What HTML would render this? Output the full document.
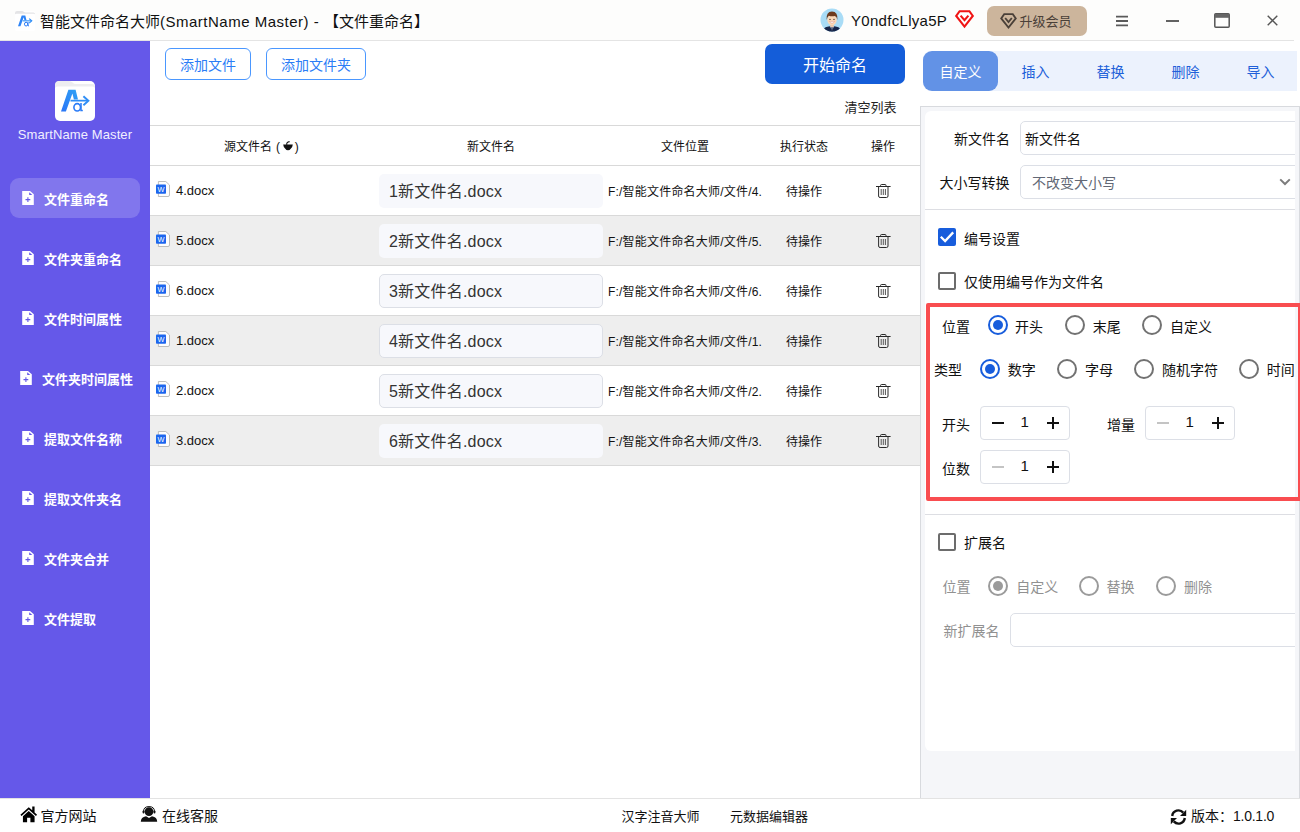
<!DOCTYPE html>
<html lang="zh-CN">
<head>
<meta charset="utf-8">
<title>智能文件命名大师(SmartName Master) - 【文件重命名】</title>
<style>
*{box-sizing:border-box;margin:0;padding:0}
html,body{width:1300px;height:832px;overflow:hidden;background:#fff}
body{position:relative;font-family:"Liberation Sans","Noto Sans CJK SC",sans-serif;color:#111;font-size:13px}
.abs{position:absolute}
.t{position:absolute;white-space:nowrap;line-height:1}
svg{position:absolute;overflow:visible}
/* title bar */
#titlebar{left:0;top:0;width:1300px;height:40px;background:#fdfdfc}
#tline{left:0;top:40px;width:1294px;height:1px;background:#e4e4e4}
/* sidebar */
#side{left:0;top:41px;width:150px;height:757px;background:#6558e9}
.nav{position:absolute;left:0;width:150px;height:40px;color:#fff;font-weight:bold;font-size:13px}
.nav .t{top:14.5px}
#navact{left:10px;top:178px;width:130px;height:40px;border-radius:9px;background:#8176ed}
/* bottom */
#bottom{left:0;top:798px;width:1300px;height:34px;background:#fff;border-top:1px solid #e3e3e3}
/* main */
.btn-o{position:absolute;height:32px;border:1px solid #4a97ff;border-radius:6px;color:#2b7df6;font-size:14px;text-align:center;line-height:30px;background:#fff}
#start{left:765px;top:44px;width:140px;height:40px;border-radius:7px;background:#145dd9;color:#fff;font-size:16px;text-align:center;line-height:44px}
.hl{position:absolute;left:150px;width:770px;height:1px;background:#d9d9d9}
.rowg{position:absolute;left:150px;width:770px;height:49px;background:#eee}
.th{font-size:12px;color:#111}
.fn{font-size:13px;color:#111}
.inp{position:absolute;left:379px;width:224px;height:34px;border-radius:5px;background:#f7f8fc;font-size:16px;color:#333;line-height:35px;padding-left:10px;white-space:nowrap;letter-spacing:.2px}
.loc{font-size:12px;color:#111;letter-spacing:.2px}
.st{font-size:12px;color:#111}
/* right */

.tab{position:absolute;top:51px;width:75px;height:40px;line-height:42px;text-align:center;font-size:14px;color:#2060d9}
#tabbar{left:923px;top:51px;width:374px;height:40px;background:#ecf2fd;border-radius:8px 0 0 8px}
#tabact{left:923px;top:51px;width:75px;height:40px;background:#6292e6;border-radius:9px}
#panel{left:920px;top:106px;width:380px;height:692px;background:#f5f6f9;border-left:1px solid #d8dade;border-top:1px solid #d8dade;border-right:1px solid #d8dade}
#card{left:925px;top:111px;width:370px;height:640px;background:#fff;border-radius:6px 0 0 6px;overflow:hidden}
.lb{font-size:14px;color:#111}
.lg{font-size:14px;color:#919191}
.ibox{position:absolute;border:1px solid #dcdfe6;border-radius:5px;background:#fff}
.dv{position:absolute;left:925px;width:370px;height:1px;background:#dddee3}
.cb{position:absolute;width:18px;height:18px;border-radius:2px}
.cbu{border:2px solid #6c6c6c;background:#fff}
.cbc{background:#185ddc}
.rd{position:absolute;width:20px;height:20px;border-radius:50%;border:2px solid #727272;background:#fff}
.rdc{border-color:#185ddc}
.rdc:after{content:"";position:absolute;left:3px;top:3px;width:10px;height:10px;border-radius:50%;background:#185ddc}
.rdg{border-color:#9b9b9b}
.rdgc:after{content:"";position:absolute;left:3px;top:3px;width:10px;height:10px;border-radius:50%;background:#9b9b9b}
.stp{position:absolute;width:90px;height:34px;border:1px solid #dcdfe6;border-radius:4px;background:#fff}
.stp b{position:absolute;background:#111}
.stp .t{font-size:15px;color:#111;top:6.5px}
#redbox{left:926px;top:303px;width:376px;height:198px;border:4px solid #f94d50;border-radius:2px}
</style>
</head>
<body>
<div id="titlebar" class="abs">
<svg style="left:15px;top:11px" width="20" height="20" viewBox="0 0 40 40"><rect x="0" y="0" width="40" height="40" rx="4" fill="#fff"/><path d="M0 4 Q0 0 4 0 H14 Q16 0 17.5 1.5 Q19 3 21 3 H37 Q40 3 40 6 V7 H0 Z" fill="#e4e4e6"/><path d="M0 8 Q0 5.5 2.5 5.5 H37.5 Q40 5.5 40 8 V12 H0Z" fill="#fff"/><path d="M13.4 8.8 H20.6 L23 18.6 H18.9 L17.4 12.6 L10.9 30.6 H6 Z" fill="#2d84f6"/><rect x="15.5" y="18.6" width="17.5" height="2.2" fill="#2f8ef6"/><path d="M28.4 15.2 L33.4 19.7 L28.4 24.2" stroke="#2f8ef6" stroke-width="2.4" fill="none"/><ellipse cx="22.2" cy="26.3" rx="3.3" ry="3.7" fill="none" stroke="#2a7cf7" stroke-width="2"/><path d="M26 22 V29.6 H27.8" stroke="#2a7cf7" stroke-width="2" fill="none"/></svg>
<div class="t" id="ttl" style="left:40px;top:14px;font-size:15px;color:#111">智能文件命名大师<span style="letter-spacing:.5px">(SmartName Master) - </span>【文件重命名】</div>
<svg style="left:820px;top:8px" width="24" height="24" viewBox="0 0 24 24"><defs><clipPath id="avc"><circle cx="12" cy="12" r="11.5"/></clipPath></defs><circle cx="12" cy="12" r="11.5" fill="#a9dcf6"/><g clip-path="url(#avc)"><path d="M4 24 V21.6 Q4 19.2 8.4 18.6 L12 18 L15.6 18.6 Q20 19.2 20 21.6 V24 Z" fill="#17264a"/><path d="M10.2 18 L12 24 L13.8 18 Z" fill="#fff"/><path d="M11.5 18.8 h1 l.5 5 h-2z" fill="#17264a"/><rect x="10.4" y="15.4" width="3.2" height="3.4" fill="#f0c49e"/><ellipse cx="12" cy="12" rx="4.7" ry="5.2" fill="#fbd9b8"/><path d="M6.6 12 Q5.8 3.6 12 3.4 Q18.2 3.6 17.4 12 Q17 8.8 15 8 Q11.4 8.8 8.8 7.8 Q7.2 9 6.6 12Z" fill="#6e3c1e"/><path d="M9.3 13.4 Q12 17 14.7 13.4 Z" fill="#fff" stroke="#d9826f" stroke-width=".4"/><circle cx="10" cy="11.4" r=".65" fill="#3a2a22"/><circle cx="14" cy="11.4" r=".65" fill="#3a2a22"/></g></svg>
<div class="t" id="uname" style="left:851px;top:12.5px;font-size:15px;letter-spacing:.3px;color:#111">Y0ndfcLlya5P</div>
<svg style="left:955px;top:10px" width="19" height="18" viewBox="0 0 19 18"><path d="M4.6 1.2 H14.4 L17.8 6 L9.5 16.6 L1.2 6 Z" fill="#fff" stroke="#f01414" stroke-width="2.1" stroke-linejoin="miter"/><path d="M5.6 5.6 L9.5 10.2 L13.4 5.6" fill="none" stroke="#f01414" stroke-width="2.1"/></svg>
<div class="abs" style="left:987px;top:6px;width:100px;height:30px;border-radius:7px;background:#ccb59c"></div>
<svg style="left:1000px;top:13px" width="17" height="16" viewBox="0 0 17 16"><path d="M4.2 1.2 H12.8 L15.8 5.4 L8.5 14.6 L1.2 5.4 Z" fill="none" stroke="#4a4038" stroke-width="1.8" stroke-linejoin="miter"/><path d="M5.2 5 L8.5 9 L11.8 5" fill="none" stroke="#4a4038" stroke-width="1.8"/></svg>
<div class="t" id="upg" style="left:1019.5px;top:15px;font-size:13px;color:#4a4038">升级会员</div>
<svg style="left:1116px;top:15px" width="12" height="12" viewBox="0 0 12 12"><path d="M0 1.7 H12 M0 6 H12 M0 10.3 H12" stroke="#5a5a5a" stroke-width="1.8"/></svg>
<svg style="left:1166px;top:20px" width="13" height="2" viewBox="0 0 13 2"><path d="M0 1 H13" stroke="#5a5a5a" stroke-width="1.9"/></svg>
<svg style="left:1214px;top:13px" width="16" height="15" viewBox="0 0 16 15"><rect x=".8" y=".8" width="14.4" height="13.4" rx="1" fill="none" stroke="#555" stroke-width="1.5"/><rect x=".8" y=".8" width="14.4" height="4" fill="#666"/></svg>
<svg style="left:1267px;top:15px" width="11" height="11" viewBox="0 0 11 11"><path d="M.7 .7 L10.3 10.3 M10.3 .7 L.7 10.3" stroke="#555" stroke-width="1.4"/></svg>
</div>
<div id="tline" class="abs"></div>
<div id="side" class="abs">
<svg style="left:55px;top:40px" width="40" height="40" viewBox="0 0 40 40"><defs><linearGradient id="lg" x1="0" y1="1" x2="1" y2="0"><stop offset="0" stop-color="#2a74f7"/><stop offset="1" stop-color="#2fa2f5"/></linearGradient></defs><rect x="0" y="0" width="40" height="40" rx="5" fill="#fff"/><path d="M0 4 Q0 0 4 0 H14 Q16 0 17.5 1.5 Q19 3 21 3 H37 Q40 3 40 6 V7 H0 Z" fill="#ededf0"/><path d="M0 8 Q0 5.5 2.5 5.5 H37.5 Q40 5.5 40 8 V12 H0Z" fill="#fff"/><path d="M13.4 8.8 H20.6 L23 18.6 H18.9 L17.4 12.6 L10.9 30.6 H6 Z" fill="url(#lg)"/><rect x="15.5" y="18.8" width="17.5" height="1.7" fill="#2f8ef6"/><path d="M28.4 15.2 L33.4 19.7 L28.4 24.2" stroke="#2f8ef6" stroke-width="1.9" fill="none"/><ellipse cx="22.2" cy="26.3" rx="3.3" ry="3.7" fill="none" stroke="#2a7cf7" stroke-width="1.6"/><path d="M26 22 V29.6 H27.8" stroke="#2a7cf7" stroke-width="1.5" fill="none"/></svg>
<div class="t" id="smn" style="left:0;width:150px;text-align:center;top:87px;font-size:13px;color:#f1efff;letter-spacing:.1px">SmartName Master</div>
<div id="navact" class="abs" style="top:137px"></div>
<div class="nav" style="top:137px"><svg style="left:22px;top:13px" width="12" height="14" viewBox="0 0 12 14"><path d="M0.2 0 H8 L11.8 3.3 V14 H0.2 Z" fill="#fff"/><path d="M7.2 1.3 V4 H10.3 Z" fill="#6558e9"/><path d="M3.5 8.6 H8.3 M5.9 6.2 V11" stroke="#6558e9" stroke-width="1.1"/></svg><div class="t" style="left:44px">文件重命名</div></div>
<div class="nav" style="top:197px"><svg style="left:22px;top:13px" width="12" height="14" viewBox="0 0 12 14"><path d="M0.2 0 H8 L11.8 3.3 V14 H0.2 Z" fill="#fff"/><path d="M7.2 1.3 V4 H10.3 Z" fill="#6558e9"/><path d="M3.5 8.6 H8.3 M5.9 6.2 V11" stroke="#6558e9" stroke-width="1.1"/></svg><div class="t" style="left:44px">文件夹重命名</div></div>
<div class="nav" style="top:257px"><svg style="left:22px;top:13px" width="12" height="14" viewBox="0 0 12 14"><path d="M0.2 0 H8 L11.8 3.3 V14 H0.2 Z" fill="#fff"/><path d="M7.2 1.3 V4 H10.3 Z" fill="#6558e9"/><path d="M3.5 8.6 H8.3 M5.9 6.2 V11" stroke="#6558e9" stroke-width="1.1"/></svg><div class="t" style="left:44px">文件时间属性</div></div>
<div class="nav" style="top:317px"><svg style="left:20px;top:13px" width="12" height="14" viewBox="0 0 12 14"><path d="M0.2 0 H8 L11.8 3.3 V14 H0.2 Z" fill="#fff"/><path d="M7.2 1.3 V4 H10.3 Z" fill="#6558e9"/><path d="M3.5 8.6 H8.3 M5.9 6.2 V11" stroke="#6558e9" stroke-width="1.1"/></svg><div class="t" style="left:42px">文件夹时间属性</div></div>
<div class="nav" style="top:377px"><svg style="left:22px;top:13px" width="12" height="14" viewBox="0 0 12 14"><path d="M0.2 0 H8 L11.8 3.3 V14 H0.2 Z" fill="#fff"/><path d="M7.2 1.3 V4 H10.3 Z" fill="#6558e9"/><path d="M3.5 8.6 H8.3 M5.9 6.2 V11" stroke="#6558e9" stroke-width="1.1"/></svg><div class="t" style="left:44px">提取文件名称</div></div>
<div class="nav" style="top:437px"><svg style="left:22px;top:13px" width="12" height="14" viewBox="0 0 12 14"><path d="M0.2 0 H8 L11.8 3.3 V14 H0.2 Z" fill="#fff"/><path d="M7.2 1.3 V4 H10.3 Z" fill="#6558e9"/><path d="M3.5 8.6 H8.3 M5.9 6.2 V11" stroke="#6558e9" stroke-width="1.1"/></svg><div class="t" style="left:44px">提取文件夹名</div></div>
<div class="nav" style="top:497px"><svg style="left:22px;top:13px" width="12" height="14" viewBox="0 0 12 14"><path d="M0.2 0 H8 L11.8 3.3 V14 H0.2 Z" fill="#fff"/><path d="M7.2 1.3 V4 H10.3 Z" fill="#6558e9"/><path d="M3.5 8.6 H8.3 M5.9 6.2 V11" stroke="#6558e9" stroke-width="1.1"/></svg><div class="t" style="left:44px">文件夹合并</div></div>
<div class="nav" style="top:557px"><svg style="left:22px;top:13px" width="12" height="14" viewBox="0 0 12 14"><path d="M0.2 0 H8 L11.8 3.3 V14 H0.2 Z" fill="#fff"/><path d="M7.2 1.3 V4 H10.3 Z" fill="#6558e9"/><path d="M3.5 8.6 H8.3 M5.9 6.2 V11" stroke="#6558e9" stroke-width="1.1"/></svg><div class="t" style="left:44px">文件提取</div></div>
</div>
<div id="main">
<div class="btn-o" style="left:165px;top:48px;width:86px;line-height:32px">添加文件</div>
<div class="btn-o" style="left:266px;top:48px;width:100px;line-height:32px">添加文件夹</div>
<div id="start" class="abs">开始命名</div>
<div class="t" id="clear" style="left:844.5px;top:100.5px;font-size:13px;color:#222">清空列表</div>
<div class="hl" style="top:125px"></div>
<div class="hl" style="top:165px"></div>
<div class="t th" style="left:224px;top:141px">源文件名<span style="margin-left:4px">(</span> <svg style="position:relative;display:inline-block;vertical-align:0px;margin:0 -2px 0 0" width="10" height="10" viewBox="0 0 10 10"><path d="M0.2 3.6 H9.8 Q9.6 6.4 7.7 7.7 Q6.8 9.3 5 9.3 Q3.2 9.3 2.3 7.7 Q0.4 6.4 0.2 3.6Z" fill="#111"/><path d="M3.8 3.8 Q3.2 1 6.6 0.6" fill="none" stroke="#111" stroke-width="1.1"/></svg> )</div>
<div class="t th" style="left:467px;top:141px">新文件名</div>
<div class="t th" style="left:661px;top:141px">文件位置</div>
<div class="t th" style="left:780px;top:141px">执行状态</div>
<div class="t th" style="left:871px;top:141px">操作</div>
<div class="hl" style="top:215px"></div>
<svg style="left:156px;top:181px" width="14" height="16" viewBox="0 0 14 16"><path d="M2.4 .5 H9.8 L13.5 4 V14 Q13.5 15.5 12 15.5 H2.4 Z" fill="#fdfdfd" stroke="#adadad" stroke-width=".8"/><rect x="0" y="3.4" width="10" height="9.4" rx=".8" fill="#1c66ee"/><text x="5" y="10.6" font-size="7.4" fill="#fff" text-anchor="middle" font-family="Liberation Sans, sans-serif">W</text></svg>
<div class="t fn" style="left:176px;top:184px">4.docx</div>
<div class="inp" style="top:174px">1新文件名.docx</div>
<div class="t loc" style="left:608px;top:185.5px">F:/智能文件命名大师/文件/4.</div>
<div class="t st" style="left:786px;top:185.5px">待操作</div>
<svg style="left:875.5px;top:183.5px" width="15" height="14" viewBox="0 0 15 14"><path d="M0 2.5 H14.6" stroke="#2a2a2a" stroke-width="1"/><path d="M4.6 2.4 V1.4 Q4.6 .5 5.5 .5 H9.1 Q10 .5 10 1.4 V2.4" fill="none" stroke="#2a2a2a" stroke-width="1"/><path d="M2.6 2.8 V12 Q2.6 13.5 4.1 13.5 H10.5 Q12 13.5 12 12 V2.8" fill="none" stroke="#2a2a2a" stroke-width="1"/><path d="M5.2 5 V11 M7.3 5 V11 M9.4 5 V11" stroke="#555" stroke-width="1"/></svg>
<div class="rowg" style="top:216px"></div>
<div class="hl" style="top:265px"></div>
<svg style="left:156px;top:231px" width="14" height="16" viewBox="0 0 14 16"><path d="M2.4 .5 H9.8 L13.5 4 V14 Q13.5 15.5 12 15.5 H2.4 Z" fill="#fdfdfd" stroke="#adadad" stroke-width=".8"/><rect x="0" y="3.4" width="10" height="9.4" rx=".8" fill="#1c66ee"/><text x="5" y="10.6" font-size="7.4" fill="#fff" text-anchor="middle" font-family="Liberation Sans, sans-serif">W</text></svg>
<div class="t fn" style="left:176px;top:234px">5.docx</div>
<div class="inp" style="top:224px">2新文件名.docx</div>
<div class="t loc" style="left:608px;top:235.5px">F:/智能文件命名大师/文件/5.</div>
<div class="t st" style="left:786px;top:235.5px">待操作</div>
<svg style="left:875.5px;top:233.5px" width="15" height="14" viewBox="0 0 15 14"><path d="M0 2.5 H14.6" stroke="#2a2a2a" stroke-width="1"/><path d="M4.6 2.4 V1.4 Q4.6 .5 5.5 .5 H9.1 Q10 .5 10 1.4 V2.4" fill="none" stroke="#2a2a2a" stroke-width="1"/><path d="M2.6 2.8 V12 Q2.6 13.5 4.1 13.5 H10.5 Q12 13.5 12 12 V2.8" fill="none" stroke="#2a2a2a" stroke-width="1"/><path d="M5.2 5 V11 M7.3 5 V11 M9.4 5 V11" stroke="#555" stroke-width="1"/></svg>
<div class="hl" style="top:315px"></div>
<svg style="left:156px;top:281px" width="14" height="16" viewBox="0 0 14 16"><path d="M2.4 .5 H9.8 L13.5 4 V14 Q13.5 15.5 12 15.5 H2.4 Z" fill="#fdfdfd" stroke="#adadad" stroke-width=".8"/><rect x="0" y="3.4" width="10" height="9.4" rx=".8" fill="#1c66ee"/><text x="5" y="10.6" font-size="7.4" fill="#fff" text-anchor="middle" font-family="Liberation Sans, sans-serif">W</text></svg>
<div class="t fn" style="left:176px;top:284px">6.docx</div>
<div class="inp" style="top:274px;border:1px solid #dcdfe6;padding-left:9px;line-height:33px">3新文件名.docx</div>
<div class="t loc" style="left:608px;top:285.5px">F:/智能文件命名大师/文件/6.</div>
<div class="t st" style="left:786px;top:285.5px">待操作</div>
<svg style="left:875.5px;top:283.5px" width="15" height="14" viewBox="0 0 15 14"><path d="M0 2.5 H14.6" stroke="#2a2a2a" stroke-width="1"/><path d="M4.6 2.4 V1.4 Q4.6 .5 5.5 .5 H9.1 Q10 .5 10 1.4 V2.4" fill="none" stroke="#2a2a2a" stroke-width="1"/><path d="M2.6 2.8 V12 Q2.6 13.5 4.1 13.5 H10.5 Q12 13.5 12 12 V2.8" fill="none" stroke="#2a2a2a" stroke-width="1"/><path d="M5.2 5 V11 M7.3 5 V11 M9.4 5 V11" stroke="#555" stroke-width="1"/></svg>
<div class="rowg" style="top:316px"></div>
<div class="hl" style="top:365px"></div>
<svg style="left:156px;top:331px" width="14" height="16" viewBox="0 0 14 16"><path d="M2.4 .5 H9.8 L13.5 4 V14 Q13.5 15.5 12 15.5 H2.4 Z" fill="#fdfdfd" stroke="#adadad" stroke-width=".8"/><rect x="0" y="3.4" width="10" height="9.4" rx=".8" fill="#1c66ee"/><text x="5" y="10.6" font-size="7.4" fill="#fff" text-anchor="middle" font-family="Liberation Sans, sans-serif">W</text></svg>
<div class="t fn" style="left:176px;top:334px">1.docx</div>
<div class="inp" style="top:324px;border:1px solid #dcdfe6;padding-left:9px;line-height:33px">4新文件名.docx</div>
<div class="t loc" style="left:608px;top:335.5px">F:/智能文件命名大师/文件/1.</div>
<div class="t st" style="left:786px;top:335.5px">待操作</div>
<svg style="left:875.5px;top:333.5px" width="15" height="14" viewBox="0 0 15 14"><path d="M0 2.5 H14.6" stroke="#2a2a2a" stroke-width="1"/><path d="M4.6 2.4 V1.4 Q4.6 .5 5.5 .5 H9.1 Q10 .5 10 1.4 V2.4" fill="none" stroke="#2a2a2a" stroke-width="1"/><path d="M2.6 2.8 V12 Q2.6 13.5 4.1 13.5 H10.5 Q12 13.5 12 12 V2.8" fill="none" stroke="#2a2a2a" stroke-width="1"/><path d="M5.2 5 V11 M7.3 5 V11 M9.4 5 V11" stroke="#555" stroke-width="1"/></svg>
<div class="hl" style="top:415px"></div>
<svg style="left:156px;top:381px" width="14" height="16" viewBox="0 0 14 16"><path d="M2.4 .5 H9.8 L13.5 4 V14 Q13.5 15.5 12 15.5 H2.4 Z" fill="#fdfdfd" stroke="#adadad" stroke-width=".8"/><rect x="0" y="3.4" width="10" height="9.4" rx=".8" fill="#1c66ee"/><text x="5" y="10.6" font-size="7.4" fill="#fff" text-anchor="middle" font-family="Liberation Sans, sans-serif">W</text></svg>
<div class="t fn" style="left:176px;top:384px">2.docx</div>
<div class="inp" style="top:374px;border:1px solid #dcdfe6;padding-left:9px;line-height:33px">5新文件名.docx</div>
<div class="t loc" style="left:608px;top:385.5px">F:/智能文件命名大师/文件/2.</div>
<div class="t st" style="left:786px;top:385.5px">待操作</div>
<svg style="left:875.5px;top:383.5px" width="15" height="14" viewBox="0 0 15 14"><path d="M0 2.5 H14.6" stroke="#2a2a2a" stroke-width="1"/><path d="M4.6 2.4 V1.4 Q4.6 .5 5.5 .5 H9.1 Q10 .5 10 1.4 V2.4" fill="none" stroke="#2a2a2a" stroke-width="1"/><path d="M2.6 2.8 V12 Q2.6 13.5 4.1 13.5 H10.5 Q12 13.5 12 12 V2.8" fill="none" stroke="#2a2a2a" stroke-width="1"/><path d="M5.2 5 V11 M7.3 5 V11 M9.4 5 V11" stroke="#555" stroke-width="1"/></svg>
<div class="rowg" style="top:416px"></div>
<div class="hl" style="top:465px"></div>
<svg style="left:156px;top:431px" width="14" height="16" viewBox="0 0 14 16"><path d="M2.4 .5 H9.8 L13.5 4 V14 Q13.5 15.5 12 15.5 H2.4 Z" fill="#fdfdfd" stroke="#adadad" stroke-width=".8"/><rect x="0" y="3.4" width="10" height="9.4" rx=".8" fill="#1c66ee"/><text x="5" y="10.6" font-size="7.4" fill="#fff" text-anchor="middle" font-family="Liberation Sans, sans-serif">W</text></svg>
<div class="t fn" style="left:176px;top:434px">3.docx</div>
<div class="inp" style="top:424px">6新文件名.docx</div>
<div class="t loc" style="left:608px;top:435.5px">F:/智能文件命名大师/文件/3.</div>
<div class="t st" style="left:786px;top:435.5px">待操作</div>
<svg style="left:875.5px;top:433.5px" width="15" height="14" viewBox="0 0 15 14"><path d="M0 2.5 H14.6" stroke="#2a2a2a" stroke-width="1"/><path d="M4.6 2.4 V1.4 Q4.6 .5 5.5 .5 H9.1 Q10 .5 10 1.4 V2.4" fill="none" stroke="#2a2a2a" stroke-width="1"/><path d="M2.6 2.8 V12 Q2.6 13.5 4.1 13.5 H10.5 Q12 13.5 12 12 V2.8" fill="none" stroke="#2a2a2a" stroke-width="1"/><path d="M5.2 5 V11 M7.3 5 V11 M9.4 5 V11" stroke="#555" stroke-width="1"/></svg>
</div>
<div id="tabbar" class="abs"></div>
<div id="tabact" class="abs"></div>
<div class="tab" style="left:923px;color:#fff">自定义</div>
<div class="tab" style="left:998px">插入</div>
<div class="tab" style="left:1073px">替换</div>
<div class="tab" style="left:1148px">删除</div>
<div class="tab" style="left:1223px">导入</div>
<div id="panel" class="abs"></div>
<div id="card" class="abs">
<div class="ibox" style="left:95px;top:10px;width:300px;height:34px"></div>
<div class="ibox" style="left:95px;top:54px;width:300px;height:34px"></div>
<div class="ibox" style="left:85px;top:502px;width:300px;height:34px"></div>
</div>
<div class="t lb" style="left:954px;top:132px">新文件名</div><div class="t lb" style="left:1025px;top:132px">新文件名</div><div class="t lb" style="left:939.5px;top:176px">大小写转换</div><div class="t lb" style="color:#626875;left:1032px;top:176px">不改变大小写</div><svg style="left:1279px;top:178px" width="12" height="8" viewBox="0 0 12 8"><path d="M1.2 1.4 L6 6 L10.8 1.4" fill="none" stroke="#7c7c7c" stroke-width="2"/></svg>
<div class="dv" style="top:209px"></div>
<div class="cb cbc" style="left:938px;top:228px"></div><svg style="left:938px;top:228px" width="18" height="18" viewBox="0 0 18 18"><path d="M2.8 8.8 L7.1 13 L15.2 4.4" fill="none" stroke="#fff" stroke-width="2.3"/></svg>
<div class="t lb" style="left:964px;top:231.5px">编号设置</div><div class="cb cbu" style="left:938px;top:272px"></div>
<div class="t lb" style="left:964px;top:275px">仅使用编号作为文件名</div><div id="redbox" class="abs"></div>
<div class="t lb" style="left:942px;top:319.5px">位置</div><div class="rd rdc" style="left:987.7px;top:315px"></div><div class="t lb" style="left:1015px;top:319.5px">开头</div><div class="rd " style="left:1064.7px;top:315px"></div><div class="t lb" style="left:1092.7px;top:319.5px">末尾</div><div class="rd " style="left:1142px;top:315px"></div><div class="t lb" style="left:1170px;top:319.5px">自定义</div>
<div class="t lb" style="left:934px;top:363px">类型</div><div class="rd rdc" style="left:979.6px;top:359px"></div><div class="t lb" style="left:1007.7px;top:363px">数字</div><div class="rd " style="left:1057px;top:359px"></div><div class="t lb" style="left:1085px;top:363px">字母</div><div class="rd " style="left:1133.8px;top:359px"></div><div class="t lb" style="left:1162px;top:363px">随机字符</div><div class="rd " style="left:1238.6px;top:359px"></div><div class="t lb" style="left:1266.7px;top:363px">时间</div>
<div class="t lb" style="left:942px;top:418px">开头</div><div class="stp" style="left:980px;top:406px"><b style="left:11px;top:15.2px;width:12px;height:1.6px;background:#111"></b><div class="t" style="left:39.5px">1</div><b style="left:66px;top:15.2px;width:12px;height:1.6px"></b><b style="left:71.2px;top:10px;width:1.6px;height:12px"></b></div><div class="t lb" style="left:1107px;top:418px">增量</div><div class="stp" style="left:1145px;top:406px"><b style="left:11px;top:15.2px;width:12px;height:1.6px;background:#c4c4c4"></b><div class="t" style="left:39.5px">1</div><b style="left:66px;top:15.2px;width:12px;height:1.6px"></b><b style="left:71.2px;top:10px;width:1.6px;height:12px"></b></div>
<div class="t lb" style="left:942px;top:462px">位数</div><div class="stp" style="left:980px;top:450px"><b style="left:11px;top:15.2px;width:12px;height:1.6px;background:#c4c4c4"></b><div class="t" style="left:39.5px">1</div><b style="left:66px;top:15.2px;width:12px;height:1.6px"></b><b style="left:71.2px;top:10px;width:1.6px;height:12px"></b></div>
<div class="dv" style="top:514px"></div>
<div class="cb cbu" style="left:938px;top:533px"></div>
<div class="t lb" style="left:964px;top:535.5px">扩展名</div><div class="t lg" style="left:942.5px;top:580px">位置</div><div class="rd rdg rdgc" style="left:987.6px;top:576px"></div><div class="t lg" style="left:1016.3px;top:580px">自定义</div><div class="rd rdg" style="left:1078.8px;top:576px"></div><div class="t lg" style="left:1106.5px;top:580px">替换</div><div class="rd rdg" style="left:1156px;top:576px"></div><div class="t lg" style="left:1184px;top:580px">删除</div>
<div class="t lg" style="left:943.5px;top:623.5px">新扩展名</div>

<div id="bottom" class="abs">
<svg style="left:20px;top:6.5px" width="17.5" height="16.5" viewBox="0 0 18 17"><path d="M9 1.2 L0.4 9 L1.6 10.3 L9 3.6 L16.4 10.3 L17.6 9 L15 6.6 V0.4 H12.6 V4.4 Z" fill="#000"/><path d="M9 5.2 L3 10.6 V16.8 H7.3 V12 H10.7 V16.8 H15 V10.6 Z" fill="#000"/></svg>
<div class="t" style="left:40.5px;top:10px;font-size:14px;color:#111">官方网站</div>
<svg style="left:140px;top:7px" width="18" height="16" viewBox="0 0 18 16"><circle cx="9" cy="5.6" r="4.4" fill="#111"/><path d="M0.8 15.8 Q0.8 11 6 10.2 L9 12 L12 10.2 Q17.2 11 17.2 15.8 Z" fill="#111"/><path d="M3.6 6.4 V5.2 Q3.6 0.6 9 0.6 Q14.4 0.6 14.4 5.2 V6.4" fill="none" stroke="#111" stroke-width="1"/><rect x="2.6" y="4.4" width="1.8" height="3.2" rx=".8" fill="#111"/><rect x="13.6" y="4.4" width="1.8" height="3.2" rx=".8" fill="#111"/></svg>
<div class="t" style="left:162px;top:10px;font-size:14px;color:#111">在线客服</div>
<div class="t" style="left:621.5px;top:10.5px;font-size:13px;color:#111">汉字注音大师</div>
<div class="t" style="left:730px;top:10.5px;font-size:13px;color:#111">元数据编辑器</div>
<svg style="left:1170px;top:10px" width="17" height="16" viewBox="0 0 17 16"><path d="M2.2 7 A6.3 6.3 0 0 1 13.2 3.6" fill="none" stroke="#111" stroke-width="2.4"/><path d="M16.2 0.8 V7 H10 Z" fill="#111"/><path d="M14.8 9 A6.3 6.3 0 0 1 3.8 12.4" fill="none" stroke="#111" stroke-width="2.4"/><path d="M0.8 15.2 V9 H7 Z" fill="#111"/></svg>
<div class="t" style="left:1191px;top:10px;font-size:14px;color:#111">版本：<span style="letter-spacing:-.25px">1.0.1.0</span></div>
</div>
</body>
</html>
